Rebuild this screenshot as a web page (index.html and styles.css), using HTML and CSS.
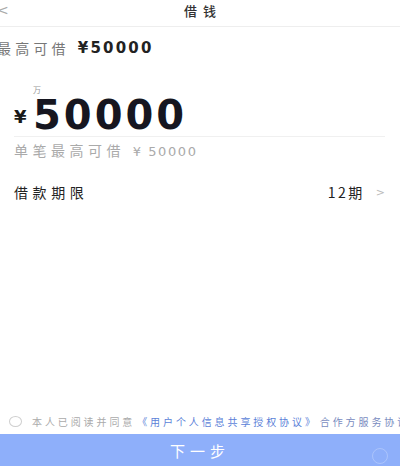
FILE: index.html
```html
<!DOCTYPE html>
<html lang="zh">
<head>
<meta charset="utf-8">
<link rel="stylesheet" href="styles.css">
</head>
<body>
<div class="page">
  <header class="nav">
    <span class="back">&lt;</span>
    <span class="title">借钱</span>
  </header>
  <div class="limit"><span class="limit-label">最高可借</span><span class="limit-value">¥50000</span></div>
  <div class="amount">
    <span class="unit">万</span>
    <div class="amount-row"><span class="yen">¥</span><span class="num">50000</span></div>
  </div>
  <div class="hint">单笔最高可借 <span class="hint-num">¥ 50000</span></div>
  <div class="term">
    <span class="term-label">借款期限</span>
    <span class="term-value">12期</span>
    <span class="chev">&gt;</span>
  </div>
  <div class="spacer"></div>
  <div class="agree">
    <span class="radio"></span>
    <span class="agree-text">本人已阅读并同意</span><span class="link">《用户个人信息共享授权协议》</span><span class="link2">合作方服务协议</span>
  </div>
  <button class="next">下一步<span class="float-ico"></span></button>
</div>
</body>
</html>
```
FILE: styles.css
```css
html, body {
  margin: 0;
  padding: 0;
  background: #fff;
}
body {
  font-family: "Noto Sans CJK SC", "Noto Sans", sans-serif;
  color: #222;
}
.page {
  width: 400px;
  height: 469px;
  display: flex;
  flex-direction: column;
  overflow: hidden;
}
.nav {
  position: relative;
  height: 27px;
  border-bottom: 1px solid #eeeeee;
  display: flex;
  align-items: center;
  justify-content: center;
  box-sizing: border-box;
  padding-bottom: 6px;
}
.back {
  position: absolute;
  left: -3px;
  top: 2px;
  font-size: 14px;
  color: #aaa;
  font-family: "DejaVu Sans", sans-serif;
}
.title {
  font-size: 13px;
  letter-spacing: 6px;
  margin-left: 6px;
  font-weight: 500;
  color: #333;
}
.limit {
  margin-top: 10px;
  margin-left: -3px;
  display: flex;
  align-items: center;
  height: 22px;
}
.limit-label {
  font-size: 14px;
  letter-spacing: 4.2px;
  color: #777;
  margin-right: 8px;
}
.limit-value {
  font-family: "DejaVu Sans", sans-serif;
  font-weight: bold;
  font-size: 15px;
  letter-spacing: 2.2px;
  color: #222;
}
.amount {
  margin: 26px 15px 0 14px;
  border-bottom: 1px solid #f0f0f0;
  padding-bottom: 4px;
}
.unit {
  display: block;
  margin-left: 19px;
  font-size: 8px;
  line-height: 10px;
  color: #999;
}
.amount-row {
  display: flex;
  align-items: center;
  height: 34px;
  margin-top: 3px;
}
.yen {
  font-family: "DejaVu Sans", sans-serif;
  font-weight: bold;
  font-size: 18px;
  line-height: 20px;
  color: #1a1a1a;
  width: 19px;
  margin-top: 3px;
}
.num {
  font-family: "DejaVu Sans", sans-serif;
  font-weight: bold;
  font-size: 40px;
  line-height: 34px;
  letter-spacing: 3px;
  color: #161620;
}
.hint {
  margin: 5px 0 0 14px;
  font-size: 14px;
  letter-spacing: 4.5px;
  color: #aaaaaa;
  line-height: 16px;
}
.hint-num {
  font-family: "DejaVu Sans", sans-serif;
  letter-spacing: 1.6px;
  font-size: 13px;
}
.term {
  margin-top: 23px;
  padding: 0 15px 0 14px;
  display: flex;
  align-items: center;
  height: 18px;
}
.term-label {
  flex: 1;
  font-size: 14px;
  letter-spacing: 4.6px;
  color: #222;
}
.term-value {
  font-family: "Noto Sans CJK SC", sans-serif;
  font-size: 14px;
  letter-spacing: 2.5px;
  color: #222;
}
.chev {
  margin-left: 11px;
  font-family: "DejaVu Sans", sans-serif;
  font-size: 11px;
  color: #bbb;
}
.spacer {
  flex: 1;
}
.agree {
  display: flex;
  align-items: center;
  white-space: nowrap;
  padding-left: 9px;
  height: 16px;
  margin-bottom: 5px;
  font-size: 10px;
  letter-spacing: 2.9px;
}
.radio {
  flex: none;
  width: 11px;
  height: 9px;
  border: 1px solid #cfcfcf;
  border-radius: 50%;
  margin-right: 10px;
}
.agree-text {
  color: #aaa;
}
.link {
  color: #5b7fd8;
  margin-left: 2px;
}
.link2 {
  color: #7a8cc0;
  margin-left: 2px;
}
.next {
  position: relative;
  flex: none;
  height: 32px;
  margin-bottom: 3px;
  border: none;
  background: #8eaffa;
  color: #fff;
  font-family: "Noto Sans CJK SC", sans-serif;
  font-size: 15px;
  letter-spacing: 5px;
  width: 100%;
  padding: 0;
}
.float-ico {
  position: absolute;
  right: 12px;
  top: 14px;
  width: 14px;
  height: 14px;
  border-radius: 50%;
  border: 1px solid rgba(255,255,255,0.25);
}
```
